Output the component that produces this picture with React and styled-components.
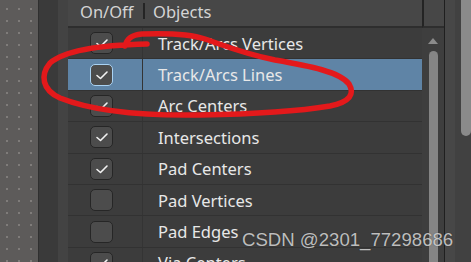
import React from "react";
import styled, { createGlobalStyle } from "styled-components";

const Global = createGlobalStyle`
  html, body { margin: 0; padding: 0; background: #3c3c3c; }
  body { font-family: "Noto Sans", "Open Sans", sans-serif; }
`;

const Screen = styled.div`
  position: relative;
  display: flex;
  width: 471px;
  height: 262px;
  overflow: hidden;
`;

const Canvas = styled.div`
  flex: none;
  width: 38px;
  background-color: #5d5b5a;
  background-image: radial-gradient(circle, #807d7b 0.7px, transparent 1px);
  background-size: 12px 12px;
  background-position: 1px 3px;
`;

const Gutter = styled.div`
  flex: none;
  width: 19px;
  border-left: 1px solid #2f2f2f;
  background: #3a3a3a;
`;

const Rail = styled.div`
  flex: none;
  width: 10px;
  background: #434343;
`;

const Panel = styled.div`
  flex: none;
  width: 354px;
  display: flex;
  flex-direction: column;
  background: #3c3c3c;
`;

const Header = styled.div`
  flex: none;
  display: flex;
  align-items: center;
  height: 26px;
  background: #474747;
  border-bottom: 2px solid #2e2e2e;
  color: #d4d4d4;
  font-size: 16.5px;
`;

const HeadCell = styled.div`
  display: flex;
  align-items: center;
  height: 100%;
  width: ${(p) => p.$w || "auto"};
  flex: ${(p) => (p.$w ? "none" : 1)};
  padding-left: ${(p) => p.$pad}px;
  box-sizing: border-box;
  padding-bottom: 3px;
  white-space: nowrap;
`;

const HeadBar = styled.div`
  flex: none;
  width: 2px;
  height: 16px;
  margin-top: -4px;
  background: #242424;
`;

const Row = styled.div`
  flex: none;
  display: flex;
  height: 31.4px;
  box-sizing: border-box;
  border-bottom: 1.5px solid #323232;
  background: ${(p) => (p.$selected ? "#5f84a6" : "#3c3c3c")};
`;

const CheckCell = styled.div`
  flex: none;
  width: 75px;
  display: flex;
  align-items: center;
  padding-left: 22px;
  box-sizing: border-box;
  border-right: 1px solid #343434;
`;

const Box = styled.div`
  width: 23px;
  height: 22px;
  box-sizing: border-box;
  border-radius: 5px;
  border: ${(p) => (p.$selected ? "1.5px solid #a9d2f3" : "1px solid #262626")};
  background: #4c4c4c;
  display: flex;
  align-items: center;
  justify-content: center;
`;

const Label = styled.div`
  flex: 1;
  display: flex;
  align-items: center;
  padding-left: 15px;
  color: #e8e8e8;
  font-size: 16.5px;
  white-space: nowrap;
`;

const ScrollCol = styled.div`
  flex: none;
  width: 22px;
  display: flex;
  flex-direction: column;
  align-items: center;
  background: #3e3e3e;
`;

const ScrollHead = styled.div`
  flex: none;
  align-self: stretch;
  height: 26px;
  background: #474747;
  border-bottom: 2px solid #2e2e2e;
  border-left: 2px solid #242424;
`;

const Arrow = styled.div`
  flex: none;
  margin-top: 10px;
  width: 0;
  height: 0;
  border-left: 5px solid transparent;
  border-right: 5px solid transparent;
  border-bottom: 6px solid #8b8b8b;
`;

const Thumb = styled.div`
  margin-top: 7px;
  width: 9px;
  flex: 1;
  border-radius: 5px 5px 0 0;
  background: #858585;
`;

const Split = styled.div`
  flex: none;
  width: 1px;
  background: #1f1f1f;
`;

const Side = styled.div`
  flex: none;
  width: 10px;
  background: #474747;
`;

const Outer = styled.div`
  flex: 1;
  background: #414141;
`;

const OuterThumb = styled.div`
  position: absolute;
  right: 0;
  top: 0;
  width: 10px;
  height: 136px;
  border-radius: 0 0 5px 5px;
  background: #8a8a8a;
`;

const Watermark = styled.div`
  position: absolute;
  left: 242px;
  top: 229px;
  font-family: "Liberation Sans", Arial, sans-serif;
  font-size: 18.6px;
  color: rgba(226, 226, 226, 0.82);
  text-shadow: 0 0 1px rgba(0, 0, 0, 0.5);
  white-space: nowrap;
`;

const Ink = styled.svg`
  position: absolute;
  left: 0;
  top: 0;
  pointer-events: none;
`;

const Check = () => (
  <svg width="14" height="12" viewBox="0 0 14 12">
    <polyline points="2,6.5 5.5,9.5 12,3" fill="none" stroke="#f2f2f2" strokeWidth="1.6" strokeLinecap="round" strokeLinejoin="round" />
  </svg>
);

const items = [
  { name: "Track/Arcs Vertices", on: true },
  { name: "Track/Arcs Lines", on: true, selected: true },
  { name: "Arc Centers", on: true },
  { name: "Intersections", on: true },
  { name: "Pad Centers", on: true },
  { name: "Pad Vertices", on: false },
  { name: "Pad Edges", on: false },
  { name: "Via Centers", on: true },
];

export default function App() {
  return (
    <>
      <Global />
      <Screen>
        <Canvas />
        <Gutter />
        <Rail />
        <Panel>
          <Header>
            <HeadCell $w="75px" $pad={12}>On/Off</HeadCell>
            <HeadBar />
            <HeadCell $pad={8}>Objects</HeadCell>
          </Header>
          {items.map((it) => (
            <Row key={it.name} $selected={it.selected}>
              <CheckCell>
                <Box $selected={it.selected}>{it.on && <Check />}</Box>
              </CheckCell>
              <Label>{it.name}</Label>
            </Row>
          ))}
        </Panel>
        <ScrollCol>
          <ScrollHead />
          <Arrow />
          <Thumb />
        </ScrollCol>
        <Split />
        <Side />
        <Outer />
        <OuterThumb />
        <Ink width="471" height="262" viewBox="0 0 471 262">
          <path
            d="M 125,46 C 127,39 131,35 142,34 C 170,33 190,34 205,39 C 225,46 245,54 275,60 C 310,66 340,72 349,84 C 355,94 350,102 330,106 C 300,111 260,114 200,115 C 140,116 90,110 60,98 C 42,90 40,75 50,63 C 65,50 100,45 147,44"
            fill="none"
            stroke="#e3191b"
            strokeWidth="5.5"
            strokeLinecap="round"
            strokeLinejoin="round"
          />
        </Ink>
        <Watermark>CSDN @2301_77298686</Watermark>
      </Screen>
    </>
  );
}
